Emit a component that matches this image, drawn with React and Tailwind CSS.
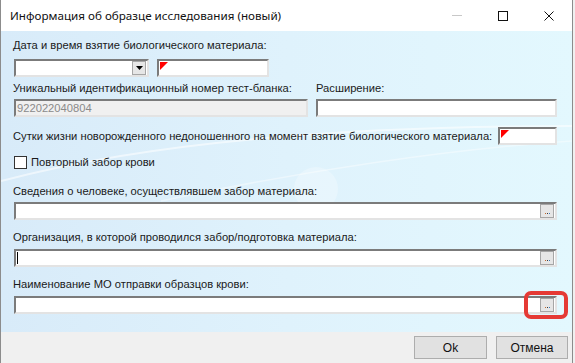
import React from 'react';

const font = { fontFamily: '"Liberation Sans", Arial, sans-serif' };

function Field({ className = '', children, disabled = false, value = '' }) {
  return (
    <div
      className={`relative h-[18px] shrink-0 border-2 border-t-[#7b7b7b] border-l-[#7b7b7b] border-b-[#e3e3e3] border-r-[#e3e3e3] ${disabled ? 'bg-[#f0f0f0]' : 'bg-white'} ${className}`}
    >
      {value && <span className="absolute left-[1px] top-[0px] text-[11.2px] leading-[14px] text-[#8a8a8a]">{value}</span>}
      {children}
    </div>
  );
}

function RedMark() {
  return (
    <svg className="absolute left-[1px] top-[1px]" width="8" height="8" viewBox="0 0 8 8">
      <polygon points="0,0 8,0 0,8" fill="#ff0000" />
    </svg>
  );
}

function Ellipsis() {
  return (
    <div className="absolute right-[1px] top-[0px] flex h-[14px] w-[14px] items-end justify-center border border-[#a6a6a6] bg-[#e6e6e6] pb-[3px]">
      <div className="flex gap-[1px]">
        <span className="h-[1px] w-[1px] bg-[#c46a2a]" />
        <span className="h-[1px] w-[1px] bg-[#3a3a3a]" />
        <span className="h-[1px] w-[1px] bg-[#3a7fc4]" />
      </div>
    </div>
  );
}

function Label({ children, className = '' }) {
  return <div className={`relative h-[14px] whitespace-nowrap text-[11.2px] leading-[14px] text-[#1a1a1a] ${className}`}>{children}</div>;
}

export default function App() {
  return (
    <div className="flex h-[363px] w-[575px] bg-[#f0f0f0]" style={font}>
      <div className="flex h-full w-[573px] flex-col border-x border-[#8c8c8c]">
        <div className="flex h-[31px] shrink-0 items-center bg-white pl-[9px]">
          <span className="text-[#111]" style={{ fontFamily: '"Noto Sans", "Liberation Sans", sans-serif', fontSize: '11.65px' }}>
            Информация об образце исследования (новый)
          </span>
          <div className="ml-auto flex h-full items-center">
            <div className="flex w-[46px] justify-center">
              <span className="h-px w-[10px] bg-[#c8c8c8]" />
            </div>
            <div className="flex w-[46px] justify-center">
              <span className="h-[10px] w-[10px] border border-[#111]" />
            </div>
            <div className="flex w-[46px] justify-center">
              <svg width="10" height="10" viewBox="0 0 10 10">
                <path d="M0.5 0.5 L9.5 9.5 M9.5 0.5 L0.5 9.5" stroke="#111" strokeWidth="1" />
              </svg>
            </div>
          </div>
        </div>

        <div className="relative flex flex-1 flex-col bg-gradient-to-r from-[#d8ebf9] via-[#dff2fc] to-[#e3f8fe] pl-[12px] pr-[15px] pt-[7px]">
          {/* faint swoosh decoration of the themed background */}
          <svg className="pointer-events-none absolute inset-0" width="571" height="301" viewBox="0 0 571 301">
            <path d="M0 150 C 150 110, 350 95, 571 95" stroke="#ffffff" strokeOpacity="0.55" strokeWidth="2" fill="none" />
            <path d="M160 170 C 300 140, 450 118, 571 110" stroke="#ffffff" strokeOpacity="0.4" strokeWidth="1.5" fill="none" />
            <circle cx="315" cy="158" r="22" fill="#ffffff" fillOpacity="0.25" />
          </svg>
          <Label>Дата и время взятие биологического материала:</Label>
          <div className="relative ml-px mt-[7px] flex gap-[8px]">
            <Field className="w-[135px]">
              <div className="absolute right-[1px] top-[0px] flex h-[14px] w-[14px] items-center justify-center border border-[#a6a6a6] bg-[#e6e6e6]">
                <svg width="7" height="4" viewBox="0 0 7 4">
                  <polygon points="0,0 7,0 3.5,4" fill="#000" />
                </svg>
              </div>
            </Field>
            <Field className="w-[112px]">
              <RedMark />
            </Field>
          </div>

          <div className="relative mt-[4px] flex">
            <Label className="w-[303px]">Уникальный идентификационный номер тест-бланка:</Label>
            <Label>Расширение:</Label>
          </div>
          <div className="relative ml-px mt-[4px] flex gap-[8px]">
            <Field className="w-[294px]" disabled value="922022040804" />
            <Field className="w-[241px]" />
          </div>

          <div className="relative mt-[10px] flex items-center justify-between">
            <Label>Сутки жизни новорожденного недоношенного на момент взятие биологического материала:</Label>
            <Field className="w-[59px]">
              <RedMark />
            </Field>
          </div>

          <div className="relative ml-px mt-[10px] flex items-center gap-[4px]">
            <span className="h-[13px] w-[13px] border border-[#333] bg-white" />
            <Label>Повторный забор крови</Label>
          </div>

          <Label className="mt-[15px]">Сведения о человеке, осуществлявшем забор материала:</Label>
          <Field className="ml-px mt-[4px] w-[543px]">
            <Ellipsis />
          </Field>

          <Label className="mt-[10px]">Организация, в которой проводился забор/подготовка материала:</Label>
          <Field className="ml-px mt-[5px] w-[543px]">
            <span className="absolute left-[1px] top-[1px] h-[12px] w-px bg-black" />
            <Ellipsis />
          </Field>

          <Label className="mt-[10px]">Наименование МО отправки образцов крови:</Label>
          <Field className="ml-px mt-[5px] w-[543px]">
            <Ellipsis />
            <div className="absolute -right-[13px] -top-[7px] h-[28px] w-[44px] rounded-[7px] border-[4px] border-[#e53a35]" />
          </Field>
        </div>

        <div className="flex h-[31px] shrink-0 items-center justify-end gap-[9px] bg-[#f0f0f0] pr-[4px]">
          <button className="h-[23px] w-[73px] border border-[#adadad] bg-[#e1e1e1] text-[12px] text-[#111]">Ok</button>
          <button className="h-[23px] w-[72px] border border-[#adadad] bg-[#e1e1e1] text-[12px] text-[#111]">Отмена</button>
        </div>
      </div>
    </div>
  );
}
